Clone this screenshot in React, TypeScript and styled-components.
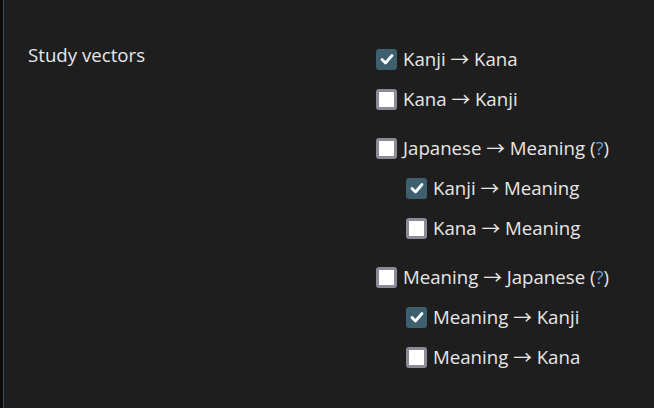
import { createGlobalStyle, styled } from "styled-components";

const Global = createGlobalStyle`
  html, body {
    margin: 0;
    padding: 0;
    background: #1e1e1e;
  }
  body {
    font-family: "Open Sans", "Noto Sans CJK JP", sans-serif;
    color: #e6e6e6;
  }
`;

type Item = { label: string; checked?: boolean; help?: boolean; sub?: Item[] };

const groups: Item[][] = [
  [
    { label: "Kanji → Kana", checked: true },
    { label: "Kana → Kanji" },
  ],
  [
    {
      label: "Japanese → Meaning",
      help: true,
      sub: [
        { label: "Kanji → Meaning", checked: true },
        { label: "Kana → Meaning" },
      ],
    },
  ],
  [
    {
      label: "Meaning → Japanese",
      help: true,
      sub: [
        { label: "Meaning → Kanji", checked: true },
        { label: "Meaning → Kana" },
      ],
    },
  ],
];

function Box({ checked }: { checked?: boolean }) {
  return (
    <Check $checked={checked}>
      {checked && (
        <svg width="16" height="16" viewBox="0 0 16 16">
          <path
            d="M3 8.5 L6.5 12 L13 4.5"
            fill="none"
            stroke="#fff"
            strokeWidth="2.8"
            strokeLinecap="round"
            strokeLinejoin="round"
          />
        </svg>
      )}
    </Check>
  );
}

function Option({ item }: { item: Item }) {
  return (
    <>
      <Row>
        <Box checked={item.checked} />
        <span>
          {item.label}
          {item.help && (
            <>
              {" "}
              (<Help>?</Help>)
            </>
          )}
        </span>
      </Row>
      {item.sub && (
        <Sub>
          {item.sub.map((s) => (
            <Option key={s.label} item={s} />
          ))}
        </Sub>
      )}
    </>
  );
}

export default function App() {
  return (
    <>
      <Global />
      <Page>
        <Setting>
          <Label>Study vectors</Label>
          <Options>
            {groups.map((g, i) => (
              <Group key={i}>
                {g.map((item) => (
                  <Option key={item.label} item={item} />
                ))}
              </Group>
            ))}
          </Options>
        </Setting>
      </Page>
    </>
  );
}

const Page = styled.div`
  min-height: 408px;
  box-sizing: border-box;
  border-left: 3px solid #0c0c0c;
  box-shadow: inset 1px 0 0 #3b4f5c;
  padding: 43px 0 0 25px;
`;

const Setting = styled.div`
  display: grid;
  grid-template-columns: 348px 1fr;
`;

const Label = styled.div`
  font-size: 18.67px;
  line-height: 24px;
`;

const Options = styled.div`
  display: flex;
  flex-direction: column;
  gap: 9px;
  padding-top: 6px;
`;

const Group = styled.div`
  display: flex;
  flex-direction: column;
`;

const Sub = styled.div`
  display: flex;
  flex-direction: column;
  padding-left: 30px;
`;

const Row = styled.div`
  display: flex;
  align-items: center;
  gap: 6px;
  height: 40px;
  font-size: 18.67px;
  line-height: 24px;
  margin-top: -10px;
  margin-bottom: 10px;
`;

const Check = styled.span<{ $checked?: boolean }>`
  width: 21px;
  height: 21px;
  box-sizing: border-box;
  border-radius: 3px;
  display: flex;
  align-items: center;
  justify-content: center;
  flex: none;
  background: ${(p) => (p.$checked ? "#3d5f6e" : "#ffffff")};
  border: ${(p) => (p.$checked ? "none" : "3px solid #8b8a99")};
`;

const Help = styled.span`
  color: #5c9bd6;
`;
